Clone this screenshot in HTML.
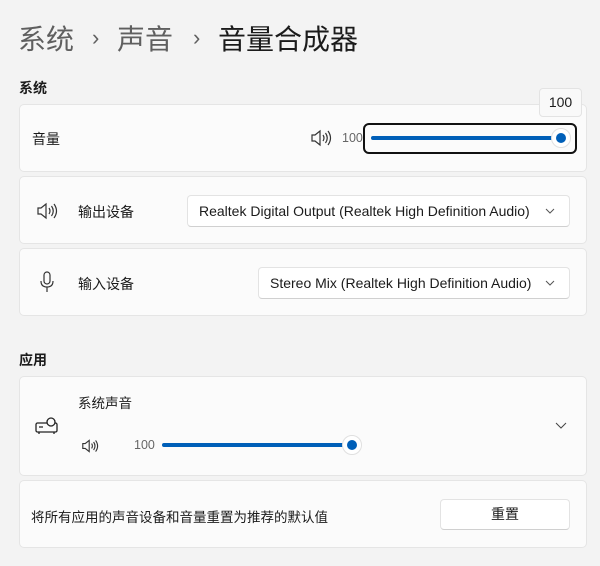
<!DOCTYPE html>
<html><head><meta charset="utf-8"><style>
*{margin:0;padding:0;box-sizing:border-box}
body{width:600px;height:566px;background:#f3f3f3;font-family:"Liberation Sans","Noto Sans CJK SC",sans-serif;color:#1b1b1b;position:relative;overflow:hidden;font-size:14px}
.a{position:absolute}
.card{position:absolute;left:19px;width:568px;background:#fbfbfb;border:1px solid #e5e5e5;border-radius:5px}
.dd{position:absolute;background:#fff;border:1px solid #e3e3e3;border-bottom-color:#d0d0d0;border-radius:4px;height:32px;font-size:14px;line-height:30px;padding-left:11px;white-space:nowrap;overflow:hidden}
.chev{position:absolute;right:14px;top:12px}
.track{position:absolute;height:4px;background:#005fb8;border-radius:2px}
.thumb{position:absolute;width:20px;height:20px;border-radius:50%;background:#fff;border:1px solid #e0e0e0}
.thumb::after{content:"";position:absolute;left:4px;top:4px;width:10px;height:10px;border-radius:50%;background:#005fb8}
</style></head><body>
<div class="a" style="left:18px;top:22px;font-size:28px;line-height:36px;color:#5f5f5f">系统</div>
<div class="a" style="left:92px;top:25px;font-size:22px;color:#5f5f5f">›</div>
<div class="a" style="left:117px;top:22px;font-size:28px;line-height:36px;color:#5f5f5f">声音</div>
<div class="a" style="left:193px;top:25px;font-size:22px;color:#5f5f5f">›</div>
<div class="a" style="left:218px;top:22px;font-size:28px;line-height:36px;color:#1b1b1b">音量合成器</div>
<div class="a" style="left:19px;top:78px;font-size:14px;font-weight:bold">系统</div>

<div class="card" style="top:104px;height:68px"></div>
<div class="a" style="left:32px;top:129px">音量</div>
<svg class="a" style="left:310px;top:128px" width="22" height="20" viewBox="0 0 22 20" fill="none" stroke="#333" stroke-width="1.2"><path d="M2 7h3l5-4v14l-5-4H2z"/><path d="M13 7q2 3 0 6M15.5 5q3.5 5 0 10M18 3q5 7 0 14"/></svg>
<div class="a" style="left:342px;top:131px;font-size:12.5px;color:#666">100</div>
<div class="a" style="left:363px;top:123px;width:214px;height:31px;border:2px solid #111;border-radius:6px;background:#fbfbfb"></div>
<div class="track" style="left:371px;top:136px;width:186px"></div>
<div class="thumb" style="left:551px;top:128px"></div>
<div class="a" style="left:539px;top:88px;width:43px;height:29px;background:#f9f9f9;border:1px solid #e3e3e3;border-radius:4px;text-align:center;line-height:27px;font-size:14px">100</div>

<div class="card" style="top:176px;height:68px"></div>
<svg class="a" style="left:36px;top:201px" width="22" height="20" viewBox="0 0 22 20" fill="none" stroke="#333" stroke-width="1.2"><path d="M2 7h3l5-4v14l-5-4H2z"/><path d="M13 7q2 3 0 6M15.5 5q3.5 5 0 10M18 3q5 7 0 14"/></svg>
<div class="a" style="left:78px;top:202px">输出设备</div>
<div class="dd" style="left:187px;top:195px;width:383px">Realtek Digital Output (Realtek High Definition Audio)<svg class="chev" width="10" height="6" viewBox="0 0 10 6" fill="none" stroke="#555"><path d="M1 1l4 4 4-4"/></svg></div>

<div class="card" style="top:248px;height:68px"></div>
<svg class="a" style="left:38px;top:271px" width="18" height="22" viewBox="0 0 18 22" fill="none" stroke="#333" stroke-width="1.2"><rect x="6" y="1" width="6" height="12" rx="3"/><path d="M3 10q0 6 6 6t6-6M9 16v5"/></svg>
<div class="a" style="left:78px;top:274px">输入设备</div>
<div class="dd" style="left:258px;top:267px;width:312px">Stereo Mix (Realtek High Definition Audio)<svg class="chev" width="10" height="6" viewBox="0 0 10 6" fill="none" stroke="#555"><path d="M1 1l4 4 4-4"/></svg></div>

<div class="a" style="left:19px;top:350px;font-weight:bold">应用</div>

<div class="card" style="top:376px;height:100px"></div>
<svg class="a" style="left:35px;top:417px" width="24" height="20" viewBox="0 0 24 20" fill="none" stroke="#222" stroke-width="1.3"><rect x="1" y="6" width="21" height="9" rx="1.5"/><circle cx="16" cy="5" r="4" fill="#fbfbfb"/><path d="M4 10h4M4 15v2M19 15v2"/></svg>
<div class="a" style="left:78px;top:392px;font-size:13.5px">系统声音</div>
<svg class="a" style="left:81px;top:438px" width="18" height="16" viewBox="0 0 22 20" fill="none" stroke="#333" stroke-width="1.4"><path d="M2 7h3l5-4v14l-5-4H2z"/><path d="M13 7q2 3 0 6M15.5 5q3.5 5 0 10M18 3q5 7 0 14"/></svg>
<div class="a" style="left:134px;top:438px;font-size:12.5px;color:#666">100</div>
<div class="track" style="left:162px;top:443px;width:186px"></div>
<div class="thumb" style="left:342px;top:435px"></div>
<svg class="a" style="left:555px;top:422px" width="12" height="7" viewBox="0 0 12 7" fill="none" stroke="#444"><path d="M1 1l5 5 5-5"/></svg>

<div class="card" style="top:480px;height:68px"></div>
<div class="a" style="left:31px;top:506px;font-size:13.5px">将所有应用的声音设备和音量重置为推荐的默认值</div>
<div class="a" style="left:440px;top:499px;width:130px;height:31px;background:#fff;border:1px solid #e3e3e3;border-bottom-color:#d0d0d0;border-radius:4px;text-align:center;line-height:29px">重置</div>
</body></html>
